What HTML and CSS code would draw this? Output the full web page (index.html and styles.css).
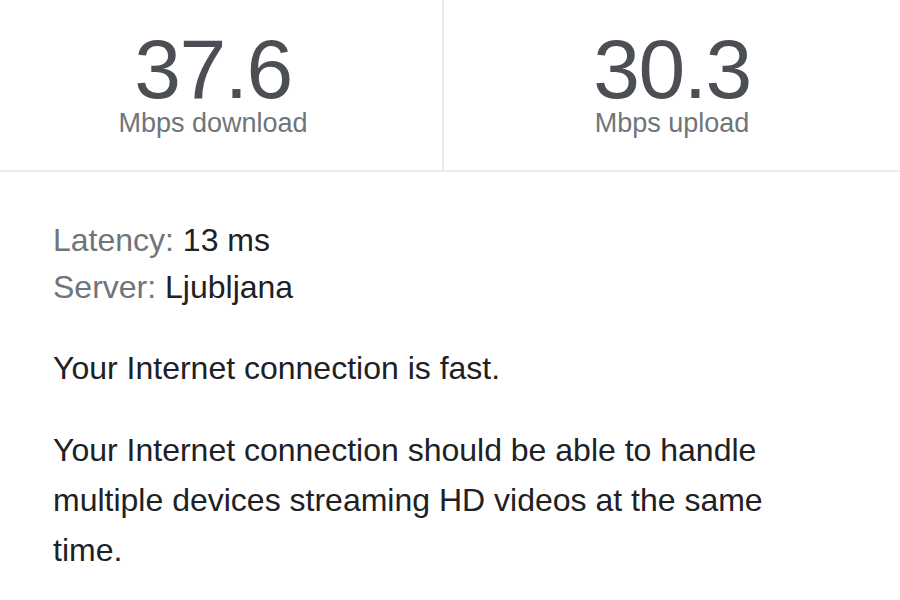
FILE: index.html
```html
<!DOCTYPE html>
<html>
<head>
    <title>Speed Test</title>
    <meta name='viewport' content='width=device-width, initial-scale=1'>
    <link rel="stylesheet" href="styles.css">
</head>
<body>
    <div class="stats">
        <div class="stat download">
            <div class="stat-value">37.6</div>
            <div class="stat-label">Mbps download</div>
        </div>
        <div class="stat upload">
            <div class="stat-value">30.3</div>
            <div class="stat-label">Mbps upload</div>
        </div>
    </div>

    <div class="details">
        <div class="info">
            <div><span class="info-key">Latency:</span> 13 ms</div>
            <div><span class="info-key">Server:</span> Ljubljana</div>
        </div>
        <p>Your Internet connection is fast.</p>
        <p>Your Internet connection should be able to handle multiple devices streaming HD videos at the same time.</p>
    </div>
</body>
</html>
```

FILE: styles.css
```css
html {
    font-family: "Liberation Sans", Arial, sans-serif;
    background: #fff;
}
body {
    margin: 0;
    color: #202124;
}
.stats {
    display: grid;
    grid-template-columns: 442px 1fr;
    height: 170px;
    border-bottom: 2px solid #ececec;
}
.stat {
    display: flex;
    flex-direction: column;
    align-items: center;
    padding-top: 29px;
}
.download {
    padding-right: 16px; /* numbers sit a bit left of the column middle */
}
.upload {
    border-left: 2px solid #ececec;
}
.stat-value {
    font-size: 84px;
    line-height: 80px;
    letter-spacing: -1.5px;
    color: #4b4f54;
}
.stat-label {
    margin-top: 1px;
    font-size: 27px;
    line-height: 27px;
    color: #70757a;
}
.details {
    padding: 45px 53px 0;
    width: 740px;
    font-size: 32px;
}
.info {
    line-height: 47px;
}
.info-key {
    color: #70757a;
}
.details p {
    margin: 32px 0 0;
    line-height: 50px;
}
```
